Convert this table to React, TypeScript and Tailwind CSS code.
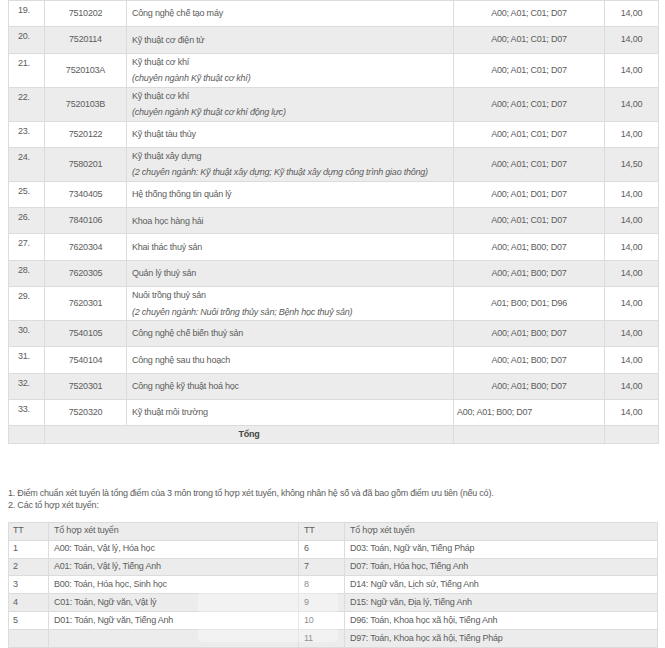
import React from "react";

type Row = {
  tt: string;
  code: string;
  name: string;
  sub?: string;
  combo: string;
  score: string;
  left?: boolean;
};

const rows: Row[] = [
  { tt: "19.", code: "7510202", name: "Công nghệ chế tạo máy", combo: "A00; A01; C01; D07", score: "14,00" },
  { tt: "20.", code: "7520114", name: "Kỹ thuật cơ điện tử", combo: "A00; A01; C01; D07", score: "14,00" },
  { tt: "21.", code: "7520103A", name: "Kỹ thuật cơ khí", sub: "(chuyên ngành Kỹ thuật cơ khí)", combo: "A00; A01; C01; D07", score: "14,00" },
  { tt: "22.", code: "7520103B", name: "Kỹ thuật cơ khí", sub: "(chuyên ngành Kỹ thuật cơ khí động lực)", combo: "A00; A01; C01; D07", score: "14,00" },
  { tt: "23.", code: "7520122", name: "Kỹ thuật tàu thủy", combo: "A00; A01; C01; D07", score: "14,00" },
  { tt: "24.", code: "7580201", name: "Kỹ thuật xây dựng", sub: "(2 chuyên ngành: Kỹ thuật xây dựng; Kỹ thuật xây dựng công trình giao thông)", combo: "A00; A01; C01; D07", score: "14,50" },
  { tt: "25.", code: "7340405", name: "Hệ thống thông tin quản lý", combo: "A00; A01; D01; D07", score: "14,00" },
  { tt: "26.", code: "7840106", name: "Khoa học hàng hải", combo: "A00; A01; C01; D07", score: "14,00" },
  { tt: "27.", code: "7620304", name: "Khai thác thuỷ sản", combo: "A00; A01; B00; D07", score: "14,00" },
  { tt: "28.", code: "7620305", name: "Quản lý thuỷ sản", combo: "A00; A01; B00; D07", score: "14,00" },
  { tt: "29.", code: "7620301", name: "Nuôi trồng thuỷ sản", sub: "(2 chuyên ngành: Nuôi trồng thủy sản; Bệnh học thuỷ sản)", combo: "A01; B00; D01; D96", score: "14,00" },
  { tt: "30.", code: "7540105", name: "Công nghệ chế biến thuỷ sản", combo: "A00; A01; B00; D07", score: "14,00" },
  { tt: "31.", code: "7540104", name: "Công nghệ sau thu hoạch", combo: "A00; A01; B00; D07", score: "14,00" },
  { tt: "32.", code: "7520301", name: "Công nghệ kỹ thuật hoá học", combo: "A00; A01; B00; D07", score: "14,00" },
  { tt: "33.", code: "7520320", name: "Kỹ thuật môi trường", combo: "A00; A01; B00; D07", score: "14,00", left: true },
];

const combos: [string, string, string, string][] = [
  ["1", "A00: Toán, Vật lý, Hóa học", "6", "D03: Toán, Ngữ văn, Tiếng Pháp"],
  ["2", "A01: Toán, Vật lý, Tiếng Anh", "7", "D07: Toán, Hóa học, Tiếng Anh"],
  ["3", "B00: Toán, Hóa học, Sinh học", "8", "D14: Ngữ văn, Lịch sử, Tiếng Anh"],
  ["4", "C01: Toán, Ngữ văn, Vật lý", "9", "D15: Ngữ văn, Địa lý, Tiếng Anh"],
  ["5", "D01: Toán, Ngữ văn, Tiếng Anh", "10", "D96: Toán, Khoa học xã hội, Tiếng Anh"],
  ["", "", "11", "D97: Toán, Khoa học xã hội, Tiếng Pháp"],
];

const cell = "border border-[#dcdcdc] p-0";

export default function App() {
  return (
    <div className="relative w-[665px] h-[648px] overflow-hidden bg-white font-['Liberation_Sans',Arial,sans-serif] text-[9px] tracking-[-0.22px] text-[#5c5c5c]">
      <div className="pl-2">
        <table className="w-[650px] table-fixed border-collapse">
          <colgroup>
            <col className="w-[36px]" />
            <col className="w-[82px]" />
            <col className="w-[327px]" />
            <col className="w-[151px]" />
            <col className="w-[54px]" />
          </colgroup>
          <tbody>
            {rows.map((r, i) => (
              <tr
                key={r.tt}
                className={`${i % 2 === 1 ? "bg-[#ececec]" : "bg-white"} ${r.sub ? "h-[33px]" : "h-[26.3px]"}`}
              >
                <td className={`${cell} align-top pl-[9px] pt-[1px] leading-[17px]`}>{r.tt}</td>
                <td className={`${cell} text-center align-middle leading-[17px]`}>{r.code}</td>
                <td className={`${cell} align-middle pl-[5px] leading-[16.5px]`}>
                  <div>{r.name}</div>
                  {r.sub && <div className="italic">{r.sub}</div>}
                </td>
                <td
                  className={`${cell} align-middle leading-[17px] ${r.left ? "text-left pl-[3px]" : "text-center"}`}
                >
                  {r.combo}
                </td>
                <td className={`${cell} text-center align-middle leading-[17px]`}>{r.score}</td>
              </tr>
            ))}
            <tr className="h-[17.5px] bg-[#ececec]">
              <td className={cell}></td>
              <td colSpan={2} className={`${cell} text-center font-bold text-[#444]`}>
                Tổng
              </td>
              <td className={cell}></td>
              <td className={cell}></td>
            </tr>
          </tbody>
        </table>
      </div>

      <div className="mt-[43px] pl-2 leading-[12.5px]">
        <p>
          1. Điểm chuẩn xét tuyển là tổng điểm của 3 môn trong tổ hợp xét tuyển, không nhân hệ số và đã bao
          gồm điểm ưu tiên (nếu có).
        </p>
        <p>2. Các tổ hợp xét tuyển:</p>
      </div>

      <div className="mt-[10px] pl-2">
        <table className="w-[649px] table-fixed border-collapse">
          <colgroup>
            <col className="w-[40px]" />
            <col className="w-[250px]" />
            <col className="w-[46px]" />
            <col className="w-[313px]" />
          </colgroup>
          <tbody>
            <tr className="h-[17.9px] bg-[#ececec]">
              <td className={`${cell} pl-[4px]`}>TT</td>
              <td className={`${cell} pl-[5px]`}>Tổ hợp xét tuyển</td>
              <td className={`${cell} pl-[5px]`}>TT</td>
              <td className={`${cell} pl-[5px]`}>Tổ hợp xét tuyển</td>
            </tr>
            {combos.map((c, i) => (
              <tr key={c[2]} className={`h-[17.9px] ${i % 2 === 1 ? "bg-[#ececec]" : "bg-white"}`}>
                <td className={`${cell} pl-[4px]`}>{c[0]}</td>
                <td className={`${cell} pl-[5px]`}>{c[1]}</td>
                <td className={`${cell} pl-[5px]`}>{c[2]}</td>
                <td className={`${cell} pl-[5px]`}>{c[3]}</td>
              </tr>
            ))}
          </tbody>
        </table>
      </div>

      <div className="pointer-events-none absolute left-[198px] top-[576px] h-[66px] w-[140px] rounded-sm bg-white opacity-30" />
    </div>
  );
}
